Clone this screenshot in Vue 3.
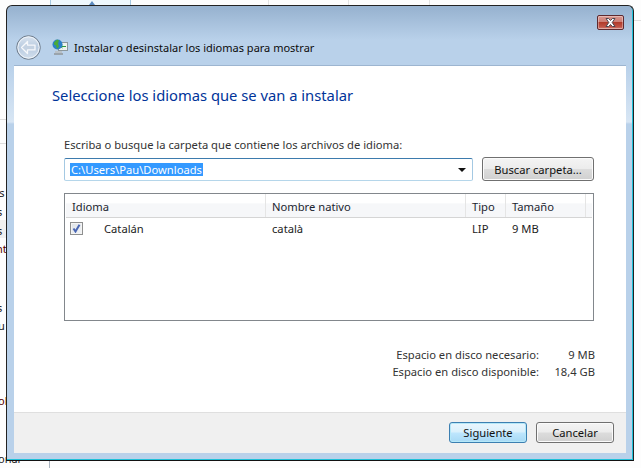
<script setup>
const columns = [
  { name: 'Idioma', width: 200 },
  { name: 'Nombre nativo', width: 200 },
  { name: 'Tipo', width: 40 },
  { name: 'Tamaño', width: 80 },
  { name: '', width: 6 }
]
const sideText = [
  { t: 'as', top: 186, left: -7, c: '#222' },
  { t: 's', top: 205, left: -3, c: '#222' },
  { t: 's', top: 224, left: -3, c: '#222' },
  { t: 'nt', top: 242, left: -4, c: '#500' },
  { t: 's', top: 301, left: -3, c: '#222' },
  { t: 'u', top: 319, left: -2, c: '#222' },
  { t: 'ol', top: 394, left: -2, c: '#500' },
  { t: 'onar', top: 452, left: -2, c: '#222' }
]
</script>

<template>
  <div class="desk">
    <div class="bg-tab"><span class="bg-arrow"></span></div>
    <i class="bg-v" style="left:268px"></i>
    <i class="bg-v" style="left:348px"></i>
    <i class="bg-v" style="left:429px"></i>
    <i class="bg-h" style="top:119px"></i>
    <i class="bg-h" style="top:143px"></i>
    <i class="bg-band"></i>
    <i class="bg-right"></i>
    <i class="bg-line"></i>
    <span v-for="s in sideText" :key="s.top" class="side" :style="{ top: s.top + 'px', left: s.left + 'px', color: s.c }">{{ s.t }}</span>

    <div class="window">
      <div class="titlebar">
        <button class="close" aria-label="Cerrar">
          <svg width="15" height="11" viewBox="0 0 15 11">
            <path d="M3 1.500h2.600l1.900 2 1.900-2H12L9.200 5.500 12 9.500H9.400l-1.900-2-1.900 2H3l2.800-4z" fill="#fff" stroke="#4a4650" stroke-width="1"/>
          </svg>
        </button>
      </div>
      <div class="navbar">
        <span class="back">
          <svg width="25" height="25" viewBox="0 0 25 25">
            <defs>
              <linearGradient id="bk" x1="0" y1="0" x2="0" y2="1">
                <stop offset="0" stop-color="#dbe5f0"/>
                <stop offset="0.5" stop-color="#b9cbe0"/>
                <stop offset="1" stop-color="#d3e0ee"/>
              </linearGradient>
            </defs>
            <circle cx="12.500" cy="12.500" r="11.800" fill="url(#bk)" stroke="#6f7c8c" stroke-width="1"/>
            <circle cx="12.500" cy="12.500" r="10.600" fill="none" stroke="#eef3f8" stroke-width="1"/>
            <path d="M5.500 12.500l6-6v3.600h7.500v4.800h-7.500v3.600z" fill="#c4d2e2" stroke="#f6f8fb" stroke-width="1.300" stroke-linejoin="round"/>
          </svg>
        </span>
        <span class="net">
          <svg width="16" height="18" viewBox="0 0 16 18">
            <rect x="6.500" y="4.500" width="9" height="8" fill="#eef2ee" stroke="#8b979c"/>
            <path d="M9 8.500h5" stroke="#2c9a3c" stroke-width="1"/>
            <path d="M10.500 7l-2 1.500 2 1.500" fill="none" stroke="#2c9a3c"/>
            <circle cx="5.500" cy="6.500" r="5" fill="#2c80c8"/>
            <path d="M2 4.500l3-3 2 1-1 3 1 3-2 2.500-1-3.500-2-1z" fill="#49a93c"/>
            <rect x="3" y="13" width="7" height="2" fill="#b9c1c8"/>
            <rect x="2" y="15" width="9" height="2" fill="#9aa4ac"/>
          </svg>
        </span>
        <span class="nav-title">Instalar o desinstalar los idiomas para mostrar</span>
      </div>

      <div class="content">
        <div class="main">
          <h1 class="heading">Seleccione los idiomas que se van a instalar</h1>
          <label class="prompt">Escriba o busque la carpeta que contiene los archivos de idioma:</label>
          <div class="path-row">
            <div class="combo">
              <span class="selected">C:\Users\Pau\Downloads</span>
              <span class="caret"></span>
            </div>
            <button class="btn browse">Buscar carpeta...</button>
          </div>
          <div class="list">
            <div class="list-head">
              <span v-for="c in columns" :key="c.name" class="head-cell" :style="{ width: c.width + 'px' }">{{ c.name }}</span>
            </div>
            <div class="list-row">
              <span class="cell first">
                <span class="check">
                  <svg width="9" height="9" viewBox="0 0 9 9"><path d="M1.500 4.500l2 3L7.500 .8" fill="none" stroke="#4a66b4" stroke-width="2"/></svg>
                </span>
                Catalán
              </span>
              <span class="cell" style="width:200px">català</span>
              <span class="cell" style="width:40px">LIP</span>
              <span class="cell" style="width:80px">9 MB</span>
            </div>
          </div>
          <div class="space">
            <span>Espacio en disco necesario:</span><span class="val">9 MB</span>
            <span>Espacio en disco disponible:</span><span class="val">18,4 GB</span>
          </div>
        </div>
        <div class="footer">
          <button class="btn default">Siguiente</button>
          <button class="btn">Cancelar</button>
        </div>
      </div>
    </div>
  </div>
</template>

<style>
html, body { margin: 0; background: #fff; }
</style>

<style scoped>
.desk {
  position: relative;
  width: 641px;
  height: 468px;
  overflow: hidden;
  background: #fdfdfd;
  font-family: "Noto Sans", sans-serif;
  font-size: 11.2px;
  color: #1c1c1c;
}
.bg-tab {
  position: absolute; left: 50px; top: -2px; width: 81px; height: 8px;
  background: #eff8fd; border: 1px solid #a6c9e2; box-sizing: border-box;
}
.bg-arrow {
  position: absolute; left: 38px; top: 2px; width: 0; height: 0;
  border: 3px solid transparent; border-bottom: 4px solid #5a8ac0; border-top: 0;
}
.bg-v { position: absolute; top: 0; width: 1px; height: 6px; background: #e3e3e3; }
.bg-h { position: absolute; left: 0; width: 7px; height: 1px; background: #ddd; }
.bg-band { position: absolute; left: 0; top: 220px; width: 7px; height: 18px; background: #f0f0f0; }
.bg-right { position: absolute; right: 0; top: 20px; width: 7px; height: 1px; background: #e0e0e0; }
.bg-line { position: absolute; left: 49px; top: 461px; width: 1px; height: 7px; background: #a9b4c0; }
.side { position: absolute; font-size: 11px; line-height: 14px; }
.window {
  position: absolute;
  left: 6px; top: 5px;
  width: 628px;
  height: 456px;
  box-sizing: border-box;
  border: 1px solid #222;
  border-bottom-color: #111;
  border-radius: 6px 6px 0 0;
  background: linear-gradient(#99b4d1 0, #99b4d1 3px, #b9d1ea 34px, #b9d1ea 60px, #d8e6f4 116px, #b9d1ea 118px, #b9d1ea 100%);
  box-shadow: inset -1px -1px 0 #1ec0d8;
  padding: 0 7px 7px;
  display: flex;
  flex-direction: column;
}
.titlebar { height: 21px; display: flex; justify-content: flex-end; padding-top: 9px; flex: none; }
.close {
  width: 27px; height: 15px; padding: 0; margin-right: 2px;
  border: 1px solid #5e2a30; border-radius: 2px;
  background: linear-gradient(#d9968f 0, #cd7e75 45%, #b13c2c 50%, #c25548 85%, #d59088 100%);
  box-shadow: inset 0 0 0 1px rgba(255,255,255,.35);
  display: flex; align-items: center; justify-content: center;
}
.navbar { height: 22px; flex: none; margin-left: -7px; padding: 0 0 7px 9px; display: flex; align-items: center; }
.back { width: 25px; height: 25px; display: block; }
.net { width: 16px; height: 18px; margin-left: 11px; }
.nav-title { margin-left: 6px; font-size: 11px; color: #0c0c0c; white-space: nowrap; }
.content {
  flex: 1;
  background: #fff;
  border-top: 1px solid #9db5d0;
  display: flex;
  flex-direction: column;
  min-height: 0;
}
.main { flex: 1; padding-left: 38px; padding-right: 31px; min-height: 0; }
.heading {
  margin: 0;
  padding-top: 19px;
  font-size: 14.750px; font-weight: 400; line-height: 20px;
  color: #003399;
  white-space: nowrap;
}
.prompt { display: block; margin-top: 32px; padding-left: 12px; line-height: 16px; color: #333; white-space: nowrap; }
.path-row { display: flex; gap: 9px; margin-top: 4px; padding-left: 12px; }
.combo {
  width: 409px; height: 23px; margin-top: 1px; box-sizing: border-box;
  border: 1px solid #a4c9e3; border-top-color: #3d7bad; border-bottom-color: #b5d6ea;
  border-radius: 2px;
  display: flex; align-items: center; justify-content: space-between;
  padding: 0 6px 0 5px;
}
.selected { background: #3399ff; color: #fff; line-height: 13px; padding: 0 1px; }
.caret { width: 0; height: 0; border: 4px solid transparent; border-top: 4px solid #111; border-bottom: 0; }
.btn {
  box-sizing: border-box;
  width: 78px; height: 21px; padding: 0;
  font: inherit; color: #111;
  border: 1px solid #707070; border-radius: 3px;
  background: linear-gradient(#f4f4f4 0, #ececec 48%, #dcdcdc 52%, #d0d0d0 100%);
  box-shadow: inset 0 0 0 1px #fbfbfb;
}
.browse { width: 112px; height: 24px; }
.list {
  margin: 12px 0 0 12px;
  width: 530px; height: 128px; box-sizing: border-box;
  border: 1px solid #82878c;
}
.list-head {
  display: flex; height: 24px; box-sizing: border-box;
  background: linear-gradient(#fff 0, #fff 40%, #f6f7f9 42%, #f6f7f9 100%);
  border-bottom: 1px solid #d5d5d5;
  margin: 0 1px;
}
.head-cell {
  flex: none; box-sizing: border-box; padding-left: 6px;
  line-height: 25px; color: #1c2530;
  border-right: 1px solid #e5e5e5;
}
.head-cell:last-child { border-right: 0; }
.list-row { display: flex; align-items: center; height: 20px; margin-left: 1px; }
.cell { flex: none; box-sizing: border-box; padding-left: 6px; white-space: nowrap; }
.first { width: 200px; display: flex; align-items: center; padding-left: 4px; }
.check {
  width: 13px; height: 13px; box-sizing: border-box; margin-right: 21px;
  border: 1px solid #8e8f8f;
  background: linear-gradient(135deg, #dfe3e8, #f2f4f6);
  box-shadow: inset 0 0 0 1px #f4f4f4;
  display: flex; align-items: center; justify-content: center;
}
.space {
  display: grid;
  grid-template-columns: auto 56px;
  justify-content: end;
  justify-items: end;
  margin: 25px 0 0;
  line-height: 17px;
  color: #333;
  white-space: nowrap;
}
.val { text-align: right; }
.footer {
  height: 41px;
  flex: none;
  box-sizing: border-box;
  background: #f0f0f0;
  border-top: 1px solid #dfdfdf;
  display: flex;
  justify-content: flex-end;
  align-items: flex-start;
  gap: 9px;
  padding: 9px 12px 0 0;
}
.default {
  border-color: #3c7fb1;
  background: linear-gradient(#eaf6fd 0, #d9f0fc 48%, #bee6fd 52%, #a7d9f5 100%);
  box-shadow: inset 0 0 0 1px #b5e8f8;
}
</style>
